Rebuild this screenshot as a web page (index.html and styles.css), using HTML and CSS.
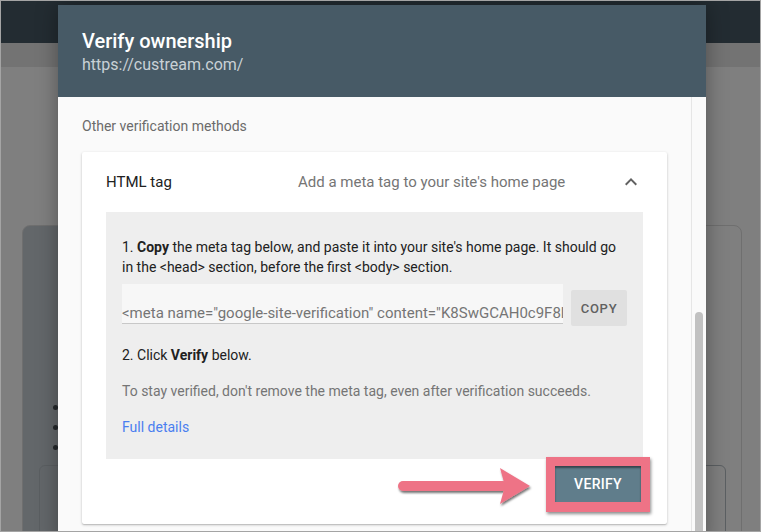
FILE: index.html
```html
<!DOCTYPE html>
<html>
<head>
  <title>Verify ownership</title>
  <link rel="stylesheet" href="styles.css">
</head>
<body>
  <div class="screen">
    <div class="appbar"></div>
    <div class="subbar"></div>
    <div class="page">
      <div class="bg-card">
        <ul class="bg-list">
          <li></li>
          <li></li>
          <li></li>
        </ul>
        <div class="bg-box"></div>
      </div>
    </div>

    <div class="dialog">
      <div class="dialog-head">
        <h1 class="dialog-title">Verify ownership</h1>
        <div class="dialog-url">https://custream.com/</div>
      </div>

      <div class="dialog-body">
        <div class="dialog-scroll">
          <p class="section-label">Other verification methods</p>

          <div class="method-card">
            <div class="method-head">
              <span class="method-name">HTML tag</span>
              <span class="method-desc">Add a meta tag to your site's home page</span>
              <svg class="chevron" width="24" height="24" viewBox="0 0 24 24">
                <path d="M12 8l-6 6 1.41 1.41L12 10.83l4.59 4.58L18 14z" fill="#616161"/>
              </svg>
            </div>

            <div class="method-panel">
              <p class="step">1. <b>Copy</b> the meta tag below, and paste it into your site's home page. It should go in the &lt;head&gt; section, before the first &lt;body&gt; section.</p>
              <div class="tag-row">
                <div class="tag-field">&lt;meta name="google-site-verification" content="K8SwGCAH0c9F8lQm2xT7vYpNw4sRzE1bJdUoHk" /&gt;</div>
                <button class="copy-btn">COPY</button>
              </div>
              <p class="step step-2">2. Click <b>Verify</b> below.</p>
              <p class="note">To stay verified, don't remove the meta tag, even after verification succeeds.</p>
              <a class="details-link" href="#">Full details</a>
            </div>

            <div class="method-actions">
              <svg class="arrow" width="138" height="44" viewBox="0 0 138 44">
                <defs>
                  <filter id="arrow-shadow" x="-10%" y="-30%" width="120%" height="160%">
                    <feDropShadow dx="1" dy="2" stdDeviation="1.2" flood-color="#000" flood-opacity="0.55"/>
                  </filter>
                </defs>
                <g filter="url(#arrow-shadow)" fill="#ee7386">
                  <rect x="2" y="17" width="110" height="10" rx="5"/>
                  <polygon points="104,4 134,22 104,40 109,22"/>
                </g>
              </svg>
              <span class="highlight">
                <button class="verify-btn">VERIFY</button>
              </span>
            </div>
          </div>
        </div>

        <div class="scrollbar">
          <div class="scroll-thumb"></div>
        </div>
      </div>
    </div>
  </div>
</body>
</html>
```

FILE: styles.css
```css
* {
  box-sizing: border-box;
}

body {
  margin: 0;
  font-family: Roboto, "Liberation Sans", Arial, sans-serif;
  background-color: #7f7f7f;
}

.screen {
  position: relative;
  width: 761px;
  height: 532px;
  overflow: hidden;
  border: 1px solid #a4a4a4;
  background-color: #7f7f7f;
}

/* page behind the modal overlay */
.appbar {
  height: 42px;
  background-color: #232c32;
}

.subbar {
  height: 24px;
  background-color: #737373;
}

.page {
  padding: 158px 0 0 21px;
}

.bg-card {
  width: 720px;
  height: 400px;
  border: 1px solid #6f6f6f;
  border-radius: 8px;
  background: linear-gradient(to right, #63676a 0, #63676a 60px, #7f7f7f 60px);
  padding: 179px 0 0 16px;
}

.bg-list {
  list-style: none;
  margin: 0;
  padding: 0 0 0 14px;
}

.bg-list li {
  width: 5px;
  height: 5px;
  margin-bottom: 15px;
  border-radius: 50%;
  background-color: #25292c;
}

.bg-box {
  width: 687px;
  height: 100px;
  margin-top: 9px;
  border: 1px solid #5b5f62;
  border-radius: 6px;
}

/* modal */
.dialog {
  position: absolute;
  left: 57px;
  top: 4px;
  width: 648px;
  height: 540px;
  background-color: #fafafa;
  box-shadow: 0 0 20px rgba(0, 0, 0, 0.35);
  display: flex;
  flex-direction: column;
}

.dialog-head {
  flex: none;
  height: 92px;
  background-color: #475a66;
  padding: 22px 24px 0;
}

.dialog-title {
  margin: 0;
  font-size: 20px;
  font-weight: 500;
  line-height: 28px;
  color: #fff;
}

.dialog-url {
  font-size: 16px;
  line-height: 20px;
  color: #c9d1d6;
}

.dialog-body {
  flex: 1;
  display: flex;
}

.dialog-scroll {
  flex: 1;
  padding: 19px 24px 0;
}

.scrollbar {
  flex: none;
  width: 15px;
  border-left: 1px solid #e6e6e6;
  padding: 215px 0 0 3px;
}

.scroll-thumb {
  width: 8px;
  height: 300px;
  border-radius: 4px;
  background-color: #c1c1c1;
}

.section-label {
  margin: 0 0 16px;
  font-size: 14px;
  line-height: 20px;
  color: #6b6b6b;
}

.method-card {
  background-color: #fff;
  border-radius: 2px;
  box-shadow: 0 1px 3px rgba(0, 0, 0, 0.2), 0 1px 1px rgba(0, 0, 0, 0.12);
}

.method-head {
  height: 60px;
  display: flex;
  align-items: center;
  padding: 0 24px;
  font-size: 15px;
}

.method-name {
  flex: 0 0 192px;
  color: #212121;
}

.method-desc {
  flex: 1;
  color: #757575;
}

.method-panel {
  margin: 0 24px;
  padding: 25px 16px 22px;
  background-color: #eeeeee;
  font-size: 14px;
  line-height: 20px;
}

.step {
  margin: 0;
  color: #212121;
}

.tag-row {
  display: flex;
  margin-top: 7px;
}

.tag-field {
  width: 441px;
  height: 40px;
  padding-top: 19px;
  overflow: hidden;
  white-space: nowrap;
  background-color: #f7f7f7;
  border-bottom: 1px solid #c8c8c8;
  color: #757575;
  font-size: 15px;
  line-height: 20px;
}

.copy-btn {
  margin: 6px 0 0 8px;
  width: 56px;
  height: 36px;
  border: none;
  border-radius: 2px;
  background-color: #e0e0e0;
  color: #616161;
  font-family: inherit;
  font-size: 13px;
  font-weight: 500;
  letter-spacing: 0.75px;
  padding: 0;
}

.step-2 {
  margin-top: 19px;
}

.note {
  margin: 16px 0 0;
  color: #757575;
}

.details-link {
  display: inline-block;
  margin-top: 16px;
  color: #4a7ef0;
  text-decoration: none;
}

.method-actions {
  display: flex;
  justify-content: flex-end;
  align-items: center;
  padding: 0 17px 12px 0;
  margin-top: -2px;
}

.arrow {
  margin-right: 12px;
  margin-top: 2px;
}

/* annotation box around the button */
.highlight {
  display: block;
  padding: 9px 9px 10px;
  background-color: #ee7386;
  box-shadow: 1px 2px 3px rgba(0, 0, 0, 0.45);
}

.verify-btn {
  display: block;
  width: 86px;
  height: 36px;
  border: none;
  border-radius: 0;
  background-color: #607d8b;
  box-shadow: inset 0 2px 2px rgba(0, 0, 0, 0.45);
  color: #fff;
  font-family: inherit;
  font-size: 14px;
  font-weight: 500;
  letter-spacing: 0.3px;
  padding: 0;
}
```
